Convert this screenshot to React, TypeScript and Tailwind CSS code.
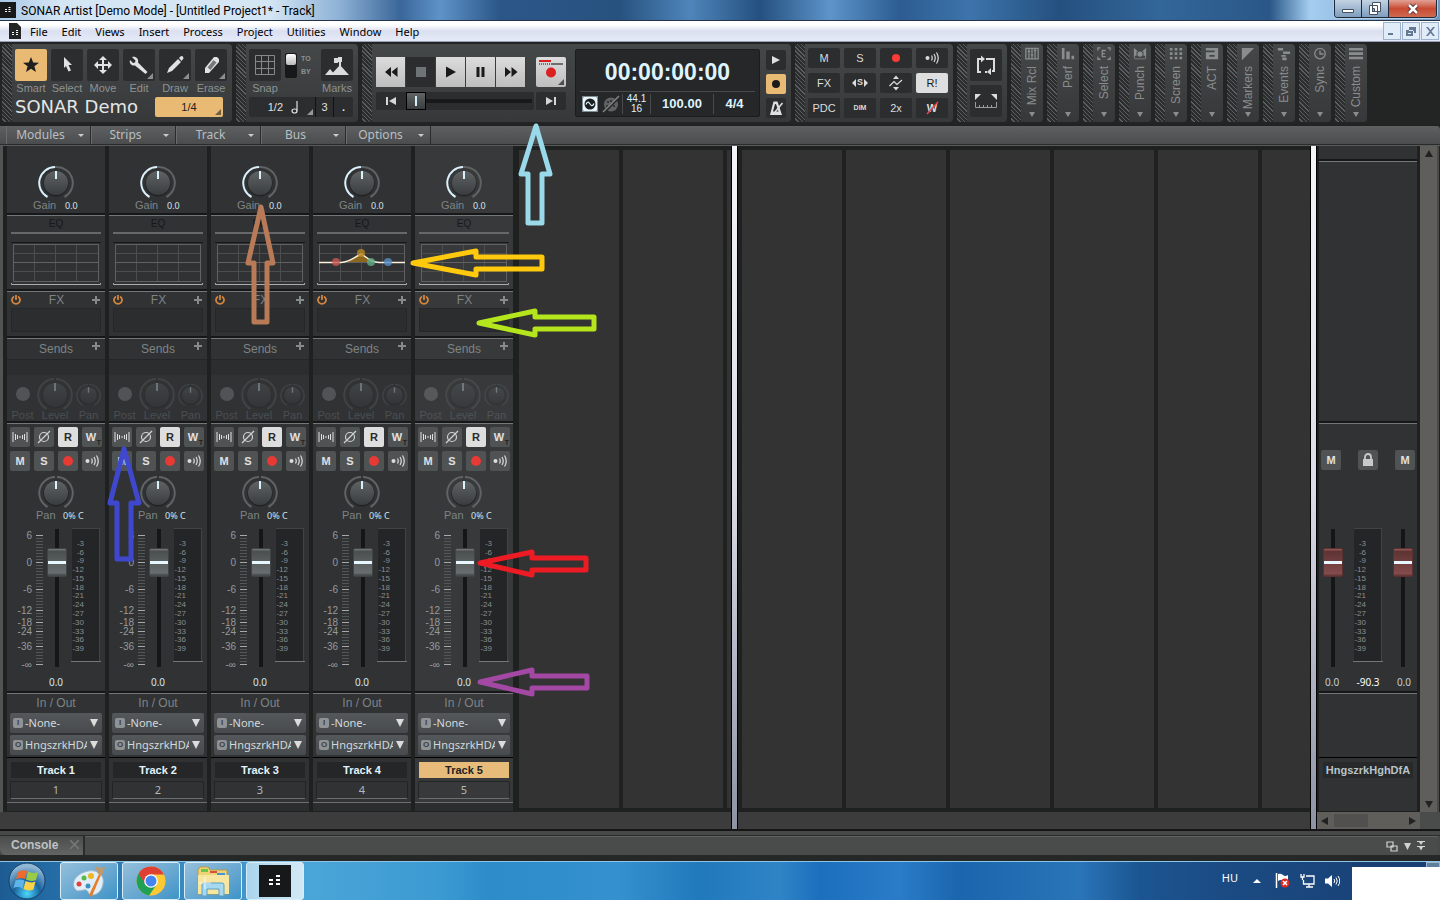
import React from "react";

const tracks = [1, 2, 3, 4, 5];
const meterLabels = [3, 6, 9, 12, 15, 18, 21, 24, 27, 30, 33, 36, 39];
const meterY = [15, 24, 32, 41, 50, 59, 67, 76, 85, 94, 103, 111, 120];
const scale = [
  { label: "6", y: 7 },
  { label: "0", y: 34 },
  { label: "-6", y: 61 },
  { label: "-12", y: 82 },
  { label: "-18", y: 94 },
  { label: "-24", y: 103 },
  { label: "-36", y: 118 },
  { label: "-∞", y: 136 },
];

const Corner = () => (
  <svg className="absolute right-0.5 bottom-0.5" width="6" height="6" viewBox="0 0 6 6">
    <path d="M6 0V6H0Z" fill="currentColor" opacity="0.6" />
  </svg>
);

const Panel = ({ children, className = "" }: { children: React.ReactNode; className?: string }) => (
  <div className="flex shrink-0 rounded-sm bg-linear-to-b from-[#454849] to-[#363839]">
    <div className="w-2.5 rounded-l-sm bg-[repeating-linear-gradient(45deg,#2b2d2e_0_2px,#5a5e5f_2px_3px)]" />
    <div className={`pt-[5px] pr-[5px] pl-[3px] ${className}`}>{children}</div>
  </div>
);

/* ---------- toolbar ---------- */

const tools = [
  { name: "Smart", icon: <path d="M16 8l2.200 5.500 5.800.2-4.600 3.600 1.600 5.700-5-3.300-5 3.300 1.600-5.700L8 13.700l5.800-.2z" fill="#1d1f20" /> },
  { name: "Select", icon: <path d="M13 8l8 8h-3.500l2.500 5.500-2.500 1L15 17l-2 2z" fill="#e2e2e2" /> },
  {
    name: "Move",
    icon: (
      <path
        d="M16 7l4 4h-3v4h4v-3l4 4-4 4v-3h-4v4h3l-4 4-4-4h3v-4h-4v3l-4-4 4-4v3h4v-4h-3z"
        fill="#e2e2e2"
      />
    ),
  },
  {
    name: "Edit",
    corner: true,
    icon: (
      <path
        d="M9 8l3.500 3.500-.5 2-2 .5L7 11c-1 3 1 6 5 5.500L22.500 25l2-2L15 13.500C16 10 13 7 9 8z"
        fill="#e2e2e2"
      />
    ),
  },
  {
    name: "Draw",
    corner: true,
    icon: <path d="M8 24l2-5 9-9 3 3-9 9zM20 9l2-2 2 .5.500 2-2 2.500z" fill="#e2e2e2" />,
  },
  {
    name: "Erase",
    corner: true,
    icon: (
      <g>
        <path d="M10 24v-5l9-11h3l2 2v3L14 24z" fill="#e2e2e2" />
        <path d="M12.500 18.500l6-7.500 3 2.500-6 7.500z" fill="#77797a" />
      </g>
    ),
  },
];

const ToolsPanel = () => (
  <Panel>
    <div className="flex gap-1">
      {tools.map(({ name, icon, corner }) => (
        <div key={name} className="flex w-8 flex-col items-center">
          <button
            aria-label={name}
            className={`relative size-8 rounded-xs ${
              name === "Smart" ? "bg-[#e9ba73]" : "bg-[#2b2d2e] text-[#cfcfcf]"
            }`}
          >
            <svg width="32" height="32" viewBox="0 0 32 32">{icon}</svg>
            {corner && <Corner />}
          </button>
          <span className="text-[11px] leading-[14px] text-[#8d9292]">{name}</span>
        </div>
      ))}
    </div>
    <div className="mt-0.5 flex h-5 items-center justify-between pr-1">
      <span className="font-['DejaVu_Sans',sans-serif] text-[18px] leading-5 whitespace-nowrap text-[#e4e6e6]">
        SONAR Demo
      </span>
      <button className="relative h-5 w-[68px] rounded-xs bg-[#e9ba73] text-[11px] text-[#222]">
        1/4
        <Corner />
      </button>
    </div>
  </Panel>
);

const SnapPanel = () => (
  <Panel>
    <div className="flex w-[104px] gap-1">
      <div className="flex w-8 flex-col items-center">
        <button aria-label="Snap" className="size-8 rounded-xs bg-[#2b2d2e]">
          <svg width="32" height="32" viewBox="0 0 32 32">
            <path d="M6.500 6.500h19v19h-19zM12.500 6v20M19.500 6v20M6 12.500h20M6 19.500h20" fill="none" stroke="#85898a" />
          </svg>
        </button>
        <span className="text-[11px] leading-[14px] text-[#8d9292]">Snap</span>
      </div>
      <button aria-label="Snap to or by" className="mt-1 flex h-[25px] w-3 flex-col rounded-xs bg-[#161819] p-px">
        <span className="h-[11px] w-full rounded-xs bg-linear-to-b from-white to-[#b9b9b9]" />
      </button>
      <div className="flex flex-1 flex-col pt-[3px] text-[7px] font-bold text-[#8d9292]">
        <span className="leading-[13px]">TO</span>
        <span className="leading-[13px]">BY</span>
      </div>
      <div className="flex w-8 flex-col items-center">
        <button aria-label="Marks" className="size-8 rounded-xs bg-[#2b2d2e]">
          <svg width="32" height="32" viewBox="0 0 32 32">
            <path d="M4 26l5-6 3 3.500L19 16l9 10zM13 9h4V8h4v5h-4v1h-4zM18 12h2v6h-2z" fill="#dcdcdc" />
          </svg>
        </button>
        <span className="text-[11px] leading-[14px] text-[#8d9292]">Marks</span>
      </div>
    </div>
    <div className="mt-0.5 flex h-5 rounded-xs bg-[#2b2d2e] text-[11px] text-[#e0e0e0]">
      <button className="relative flex flex-1 items-center justify-end gap-2 pr-[17px] text-[#e0e0e0]">
        1/2
        <svg width="7" height="13" viewBox="0 0 7 13">
          <path d="M6 0v9.500" stroke="#e0e0e0" strokeWidth="1.200" />
          <ellipse cx="3.500" cy="10" rx="2.500" ry="2" fill="none" stroke="#e0e0e0" strokeWidth="1.200" />
        </svg>
        <Corner />
      </button>
      <button className="w-[18px] border-l border-[#111]">3</button>
      <button className="w-5 border-l border-[#111] font-bold">.</button>
    </div>
  </Panel>
);

const transport = [
  { name: "Rewind", d: "M15 10v10l-6-5zM21.500 10v10l-6-5z" },
  { name: "Stop", d: "M10 10h10v10H10z" },
  { name: "Play", d: "M10 9.500v11l10-5.500z" },
  { name: "Pause", d: "M10.500 10h3v10h-3zM15.500 10h3v10h-3z" },
  { name: "Fast forward", d: "M9 10v10l6-5zM15.500 10v10l6-5z" },
];

const TransportPanel = () => (
  <Panel className="flex">
    <div className="mt-2 ml-px flex flex-col gap-[5px]">
      <div className="flex justify-between">
        <div className="flex">
          {transport.map(({ name, d }) => (
            <button
              key={name}
              aria-label={name}
              className={`h-[30px] w-[30px] border-r border-[#3a3c3d] ${
                name === "Stop" ? "bg-[#2b2d2e] text-[#6e7475]" : "bg-linear-to-b from-[#dcdcdc] to-[#bebebe] text-[#1a1a1a]"
              }`}
            >
              <svg width="29" height="30" viewBox="0 0 29 30">
                <path d={d} fill="currentColor" />
              </svg>
            </button>
          ))}
        </div>
        <button aria-label="Record" className="relative size-[30px] rounded-xs bg-linear-to-b from-[#dcdcdc] to-[#bebebe] text-black">
          <svg width="30" height="30" viewBox="0 0 30 30">
            <path d="M3 4h12" stroke="#d8201f" strokeWidth="2" />
            <path d="M15 7h12" stroke="#6f6f6f" strokeWidth="2" />
            <path d="M3 7h12" stroke="#6f6f6f" strokeWidth="2" strokeDasharray="1 1" />
            <circle cx="15" cy="15.500" r="5" fill="#dc1f1f" />
          </svg>
          <Corner />
        </button>
      </div>
      <div className="flex h-[18px] gap-0.5">
        <div className="flex w-[158px] rounded-xs bg-[#2b2d2e]">
          <button aria-label="Go to start" className="flex w-[30px] items-center justify-center">
            <svg width="10" height="8" viewBox="0 0 10 8">
              <path d="M0 0h2v8H0zM10 0v8L3 4z" fill="#d6d6d6" />
            </svg>
          </button>
          <input
            type="range"
            aria-label="Position"
            defaultValue={0}
            className="h-[18px] w-[126px] appearance-none bg-[linear-gradient(#17191a,#17191a)] bg-[length:100%_4px] bg-center bg-no-repeat [&::-webkit-slider-thumb]:h-[18px] [&::-webkit-slider-thumb]:w-5 [&::-webkit-slider-thumb]:appearance-none [&::-webkit-slider-thumb]:border [&::-webkit-slider-thumb]:border-black [&::-webkit-slider-thumb]:bg-[linear-gradient(#d5eefa,#d5eefa),linear-gradient(#606465,#3a3d3e)] [&::-webkit-slider-thumb]:bg-[length:2px_10px,100%_100%] [&::-webkit-slider-thumb]:bg-center [&::-webkit-slider-thumb]:bg-no-repeat"
          />
        </div>
        <button aria-label="Go to end" className="flex w-[30px] items-center justify-center rounded-xs bg-[#2b2d2e]">
          <svg width="10" height="8" viewBox="0 0 10 8">
            <path d="M8 0h2v8H8zM0 0v8l7-4z" fill="#d6d6d6" />
          </svg>
        </button>
      </div>
    </div>
    <div className="ml-[9px] flex h-[68px] w-[185px] flex-col rounded-xs border border-[#1b1c1d] bg-[#262728] px-1 text-[#def4ff]">
      <div className="flex h-[42px] items-center justify-center border-b border-[#48494a] pt-[3px] text-[23px] font-bold">
        00:00:00:00
      </div>
      <div className="flex flex-1 items-center text-[13px] font-bold">
        <svg width="42" height="20" viewBox="0 0 42 20">
          <rect x="2.500" y="2.500" width="15" height="15" fill="none" stroke="#dff4ff" strokeDasharray="1 1" />
          <rect x="3" y="3" width="14" height="14" rx="1" fill="#e8f6fd" />
          <circle cx="10" cy="10" r="5.500" fill="#1d1e1f" />
          <path d="M6 10.500c1.500-4 3-2 4-.5s2.500 3 4-.5" fill="none" stroke="#dff4ff" strokeWidth="1.200" />
          <circle cx="31" cy="10.500" r="7" fill="#606364" />
          <path d="M27 8h2M31 6v2M35 8h-2M26 12h2M35 12h-2" stroke="#262728" strokeWidth="1.500" />
          <path d="M23 19L39 3" stroke="#262728" strokeWidth="3" />
          <path d="M23 18L39 2" stroke="#858889" strokeWidth="1.500" />
        </svg>
        <div className="flex h-5 w-[29px] flex-col justify-center border-x border-[#48494a] text-center text-[10px] leading-[10px] font-normal">
          <span>44.1</span>
          <span>16</span>
        </div>
        <span className="flex-1 text-center leading-5">100.00</span>
        <span className="w-[42px] border-l border-[#48494a] text-center leading-5">4/4</span>
      </div>
    </div>
    <div className="ml-1.5 flex flex-col gap-1 pt-px">
      <button aria-label="Play mode" className="flex size-5 items-center justify-center rounded-xs bg-[#2b2d2e]">
        <svg width="8" height="8" viewBox="0 0 8 8"><path d="M0 0l8 4-8 4z" fill="#e0e0e0" /></svg>
      </button>
      <button aria-label="Record mode" className="flex size-5 items-center justify-center rounded-xs bg-[#e9ba73]">
        <span className="size-2 rounded-full bg-[#1b1b1b]" />
      </button>
      <button aria-label="Metronome" className="flex size-5 items-center justify-center rounded-xs bg-[#2b2d2e]">
        <svg width="16" height="16" viewBox="0 0 16 16">
          <path d="M2 15L5.500 1.500h4L14 15z" fill="#e0e0e0" />
          <path d="M5 11.500L7 4h1l2.500 7.500z" fill="#2b2d2e" />
          <path d="M7 12l7.500-9" stroke="#e0e0e0" strokeWidth="1.500" />
        </svg>
      </button>
    </div>
  </Panel>
);

const Echo = () => (
  <svg width="14" height="14" viewBox="0 0 14 14" fill="none" stroke="#dcdcdc" strokeWidth="1.200">
    <circle cx="2.500" cy="7" r="2" fill="#dcdcdc" stroke="none" />
    <path d="M6.500 4.500q1.500 2.500 0 5M9 3q2.500 4 0 8M11.500 1.500q3.500 5.500 0 11" />
  </svg>
);

const mixButtons = [
  { name: "Mute", body: "M" },
  { name: "Solo", body: "S" },
  { name: "Arm", body: <span className="size-2 rounded-full bg-[#fb3b36]" /> },
  { name: "Input echo", body: <Echo /> },
  { name: "FX", body: "FX" },
  {
    name: "Solo override",
    body: (
      <>
        <svg width="4" height="8" viewBox="0 0 4 8"><path d="M4 0v8L0 4z" fill="#dcdcdc" /></svg>
        <span className="px-px text-[9px] font-bold">S</span>
        <svg width="4" height="8" viewBox="0 0 4 8"><path d="M0 0v8l4-4z" fill="#dcdcdc" /></svg>
      </>
    ),
  },
  {
    name: "Automation",
    body: (
      <svg width="16" height="16" viewBox="0 0 16 16">
        <path d="M5 4l3-3.500L11 4zM5 12l3 3.500 3-3.500z" fill="#dcdcdc" />
        <path d="M1.500 11L6 6.500l3 3 5-4.500" fill="none" stroke="#dcdcdc" strokeWidth="1.200" />
      </svg>
    ),
  },
  { name: "Read", body: "R!" },
  { name: "PDC", body: "PDC" },
  { name: "Dim", body: <span className="text-[7px] font-bold">DIM</span> },
  { name: "2x", body: "2x" },
  {
    name: "Write",
    body: (
      <span className="relative font-bold">
        W
        <svg className="absolute top-0 -left-px" width="13" height="16" viewBox="0 0 13 16">
          <path d="M1 14L12 2" stroke="#f04440" strokeWidth="1.500" />
        </svg>
      </span>
    ),
  },
];

const MixPanel = () => (
  <Panel>
    <div className="-mt-px grid grid-cols-[repeat(4,32px)] gap-x-1 gap-y-[5px]">
      {mixButtons.map(({ name, body }) => (
        <button
          key={name}
          aria-label={name}
          className={`flex h-5 items-center justify-center rounded-xs text-[11px] ${
            name === "Read" ? "bg-[#dedede] text-[#1b1b1b]" : "bg-[#2b2d2e] text-[#dcdcdc]"
          }`}
        >
          {body}
        </button>
      ))}
    </div>
  </Panel>
);

const LoopPanel = () => (
  <Panel className="flex flex-col gap-1">
    <button aria-label="Loop" className="flex size-8 items-center justify-center rounded-xs bg-[#2b2d2e]">
      <svg width="20" height="20" viewBox="0 0 20 20" fill="none" stroke="#dcdcdc" strokeWidth="2">
        <path d="M5 17H2V4h3M10 4h8v12h-2M9 17h2" />
        <path d="M5 0.500v7L9 4zM15 13v7l-4-3z" fill="#dcdcdc" stroke="none" />
      </svg>
    </button>
    <button aria-label="Loop selection" className="flex size-8 items-center justify-center rounded-xs bg-[#2b2d2e]">
      <svg width="22" height="16" viewBox="0 0 22 16">
        <path d="M0 1h6L0 7zM22 1h-6l6 6z" fill="#dcdcdc" />
        <path d="M.5 9v5.500h21V9M4.500 12v3M8.500 12v3M12.500 12v3M16.500 12v3" fill="none" stroke="#9a9d9e" />
      </svg>
    </button>
  </Panel>
);

const collapsed = [
  { name: "Mix Rcl", d: "M1 1.500h14v12H1zM4.500 1v13M8 1v13M11.500 1v13M3 5h3M6.500 9h3M10 4h3" },
  { name: "Perf", fill: "M1 1h3v13H1zM6 5h4v9H6zM12 10h3v4h-3z" },
  { name: "Select", d: "M1 4V1h3M12 1h3v3M1 11v3h3M12 14h3v-3M10 4H6v7h4M6 7.500h3" },
  { name: "Punch", fill: "M1 1l5 4H4v5H2v4H1zM15 1l-5 4h2v5h2v4h1zM8 5a3 3 0 1 1 0 6 3 3 0 0 1 0-6zM1 13h14v1H1z" },
  { name: "Screen", fill: "M1 1h3v3H1zM6.500 1h3v3h-3zM12 1h3v3h-3zM1 6h3v3H1zM6.500 6h3v3h-3zM12 6h3v3h-3zM1 11h3v3H1zM6.500 11h3v3h-3zM12 11h3v3h-3z" },
  { name: "ACT", fill: "M1 1h14v13H1V6h10V4H1zM5 9v2h6V9z" },
  { name: "Markers", fill: "M1 1h14L1 15z" },
  { name: "Events", fill: "M1 1h6v3H1zM7 5h8v3H7zM5 9h5v2H5zM6 12h5v3H6z" },
  { name: "Sync", d: "M8 1.500a6 6 0 1 1 0 12 6 6 0 0 1 0-12M8 4v4h4" },
  { name: "Custom", fill: "M0 1h16v3H0zM0 6h16v3H0zM0 11h16v3H0z" },
];

const Toolbar = () => (
  <div className="flex h-[82px] items-stretch gap-1 overflow-hidden bg-[#232424] px-0.5 py-0.5">
    <ToolsPanel />
    <SnapPanel />
    <TransportPanel />
    <MixPanel />
    <LoopPanel />
    {collapsed.map(({ name, d, fill }) => (
      <div key={name} className="flex w-8 shrink-0 rounded-sm bg-linear-to-b from-[#454849] to-[#363839]">
        <div className="w-2.5 bg-[repeating-linear-gradient(45deg,#2b2d2e_0_2px,#5a5e5f_2px_3px)]" />
        <button className="flex flex-1 flex-col items-center pt-[3px] text-[#8a8d8d]">
          <svg width="14" height="14" viewBox="0 0 16 16">
            {d && <path d={d} fill="none" stroke="currentColor" strokeWidth="1.500" />}
            {fill && <path d={fill} fill="currentColor" fillRule="evenodd" />}
          </svg>
          <span className="mt-[5px] rotate-180 text-xs leading-4 whitespace-nowrap [writing-mode:vertical-rl]">{name}</span>
          <svg className="mt-auto mb-[5px]" width="6" height="5" viewBox="0 0 6 5">
            <path d="M0 0h6L3 5z" fill="currentColor" />
          </svg>
        </button>
      </div>
    ))}
  </div>
);

/* ---------- channel strips ---------- */

const Knob = ({ lit = false, size = 36 }: { lit?: boolean; size?: number }) => (
  <svg width={size} height={size} viewBox="0 0 36 36" fill="none">
    <defs>
      <linearGradient id="knob" x1="0" y1="0" x2="0" y2="1">
        <stop offset="0" stopColor="#5f6364" />
        <stop offset="1" stopColor="#3a3d40" />
      </linearGradient>
    </defs>
    <path d="M9.500 32A16 16 0 0 1 17 2" stroke={lit ? "#daf0fb" : "#606364"} strokeWidth="2" />
    <path d={lit ? "M17 2H18A16 16 0 0 1 26.500 32" : "M19 2A16 16 0 0 1 26.500 32"} stroke="#606364" strokeWidth="2" />
    <circle cx="18" cy="19" r="12.500" fill="#1b1c1d" opacity=".7" />
    <circle cx="18" cy="18" r="12" fill="url(#knob)" />
    <path d="M18 6v8" stroke="#daf0fb" strokeWidth="2" />
  </svg>
);

const EqGraph = ({ curve }: { curve: boolean }) => (
  <svg width="90" height="44" viewBox="0 0 90 44" fill="none">
    <path d="M0 .5h90" stroke="#171819" />
    <path d="M2 11.500h86M2 29.500h86M23.500 2v38M44.500 2v38M65.500 2v38" stroke="#4b4d4e" />
    <path d="M2 20.500h86" stroke="#5f6162" />
    <path d="M2.500 2.500h85v37h-85z" stroke="#5f6162" />
    <path d="M.5 41v1.500h89V41" stroke="#a9acac" />
    {curve && (
      <g>
        <path d="M26 20c10-.5 13-6 18-8.500 5 2.500 6 7.500 16 8.500z" fill="#8b671e" />
        <path d="M2 20.500h22c10-1 14-6 20-8.500 5 2 8 8 18 8.500h26" stroke="#fff0dc" strokeWidth="1.500" />
        <circle cx="19" cy="20" r="4" fill="#c65a54" opacity=".8" />
        <circle cx="44" cy="11" r="4" fill="#b98726" opacity=".8" />
        <circle cx="54" cy="20" r="4" fill="#5fae87" opacity=".8" />
        <circle cx="71" cy="20" r="4" fill="#568ec4" opacity=".8" />
      </g>
    )}
  </svg>
);

const Plus = () => (
  <svg width="8" height="8" viewBox="0 0 8 8"><path d="M3 0h2v3h3v2H5v3H3V5H0V3h3z" fill="#858a8b" /></svg>
);

const Meter = () => (
  <svg width="32" height="134" viewBox="0 0 32 134" fontSize="8" fontFamily="Liberation Sans, Arial, sans-serif" textAnchor="end">
    <path d="M2 0h28v133H2z" fill="#232527" />
    <path d="M2 .5h28M29.500 0v133" stroke="#414344" />
    <path d="M1 133.500h30" stroke="#747777" />
    {meterLabels.map((n, i) => (
      <text key={n} x="14" y={meterY[i] + 3} fill="#8b8e8f">{`-${n}`}</text>
    ))}
  </svg>
);

const faderClass =
  "block h-[138px] w-5 appearance-none bg-[linear-gradient(#151617,#151617)] bg-[length:4px_100%] bg-center bg-no-repeat [direction:rtl] [writing-mode:vertical-lr] [&::-webkit-slider-thumb]:h-[29px] [&::-webkit-slider-thumb]:w-5 [&::-webkit-slider-thumb]:appearance-none [&::-webkit-slider-thumb]:rounded-xs [&::-webkit-slider-thumb]:border";
const grayThumb =
  "[&::-webkit-slider-thumb]:border-[#404445] [&::-webkit-slider-thumb]:bg-[linear-gradient(transparent_12px,#e6f7ff_12px_15px,transparent_15px),linear-gradient(#6c7172_0_1px,#4a4e4f_2px,#686e6f_24px,#474b4c_26px)]";
const redThumb =
  "[&::-webkit-slider-thumb]:border-[#5a3232] [&::-webkit-slider-thumb]:bg-[linear-gradient(transparent_12px,#e6f7ff_12px_15px,transparent_15px),linear-gradient(#905454_0_1px,#5e3333_2px,#844b4b_25px,#643838_26px)]";

const Fader = ({ label, red = false }: { label: string; red?: boolean }) => (
  <input type="range" aria-label={label} min={0} max={109} defaultValue={90} className={`${faderClass} ${red ? redThumb : grayThumb}`} />
);

const sectionEnd = "border-b-2 border-b-[#161718]";
const section = "border-t border-t-[#747777] border-b-2 border-b-[#161718]";
const stripButton = "flex size-5 items-center justify-center rounded-xs bg-[#505354] text-[11px] font-bold text-[#e0e0e0]";

const IoSelect = ({ kind, value, id }: { kind: string; value: string; id: string }) => (
  <div className="flex h-5 items-center rounded-xs bg-linear-to-b from-[#54585a] to-[#484b4d] pr-1 pl-[3px]">
    <label htmlFor={id} className="w-2.5 rounded-xs bg-[#8f9394] text-center text-[8px] leading-[10px] font-bold text-[#3c3f40]">
      {kind}
    </label>
    <select
      id={id}
      className="ml-0.5 w-[62px] appearance-none overflow-hidden bg-transparent p-0 font-['Noto_Sans',sans-serif] text-[11px] leading-5 text-[#d4d8d9]"
    >
      <option>{value}</option>
    </select>
    <svg className="ml-auto" width="8" height="8" viewBox="0 0 8 8"><path d="M0 0h8L4 8z" fill="#dcdcdc" /></svg>
  </div>
);

const Strip = ({ n }: { n: number }) => {
  const active = n === 5;
  return (
    <div className={`flex w-[98px] shrink-0 flex-col text-[#7e8485] ${active ? "bg-[#37393b]" : "bg-[#303234]"}`}>
      <div className={`flex h-[69px] flex-col items-center pt-[19px] ${sectionEnd}`}>
        <Knob lit />
        <div className="-mt-px flex w-full items-center pl-[26px] text-[11px] leading-[11px]">
          <span className="w-8">Gain</span>
          <span className="font-['Noto_Sans',sans-serif] text-[9px] text-[#d3e2ea]">0.0</span>
        </div>
      </div>
      <div className={`flex h-[76px] flex-col items-center px-1 ${section}`}>
        <span className="w-full border-b-2 border-[#66696a] text-center text-[10px] leading-4 text-[#17181a]">EQ</span>
        <div className="mt-2">
          <EqGraph curve={n === 4} />
        </div>
      </div>
      <div className={`h-[47px] px-1 ${section}`}>
        <div className="flex h-4 items-center justify-between pr-px">
          <button aria-label="FX power">
            <svg width="10" height="10" viewBox="0 0 10 10" fill="none" stroke="#d2853c" strokeWidth="1.800">
              <path d="M3 1.500a4 4 0 1 0 4 0M5 0v5" />
            </svg>
          </button>
          <span className="text-xs leading-4">FX</span>
          <button aria-label="Add effect"><Plus /></button>
        </div>
        <div className="h-6 border border-[#252728] bg-[#2b2d2f]" />
      </div>
      <div className={`flex h-[85px] flex-col ${section}`}>
        <div className="flex h-5 items-center justify-between pr-[5px] pl-[13px]">
          <span className="flex-1 text-center text-xs leading-5">Sends</span>
          <button aria-label="Add send" className="mb-1.5"><Plus /></button>
        </div>
        <div className="h-4 border-t border-[#242627] bg-[#2b2d2f]" />
        <div className="flex flex-1 justify-between px-1 text-[11px] leading-[11px] opacity-35">
          <div className="flex w-[23px] flex-col items-center">
            <span className="mt-3 mb-[9px] size-3.5 rounded-full bg-[#8f9596]" />
            Post
          </div>
          <div className="flex flex-col items-center pt-0.5">
            <Knob />
            <span className="-mt-[3px]">Level</span>
          </div>
          <div className="flex w-[25px] flex-col items-center pt-2">
            <Knob size={25} />
            <span className="mt-0.5">Pan</span>
          </div>
        </div>
      </div>
      <div className={`flex h-[270px] flex-col ${section}`}>
        <div className="grid grid-cols-[repeat(4,20px)] gap-1 pt-[3px] pl-[3px]">
          <button aria-label="Interleave" className={stripButton}>
            <svg width="16" height="10" viewBox="0 0 16 10">
              <path d="M1 0v10M3.500 2v6M5.500 3v4M10.500 3v4M12.500 2v6M15 0v10M7 5h2" stroke="#e0e0e0" />
            </svg>
          </button>
          <button aria-label="Phase" className={stripButton}>
            <svg width="14" height="14" viewBox="0 0 14 14" fill="none" stroke="#d0d3d3" strokeWidth="1.200">
              <circle cx="7" cy="7" r="4.500" />
              <path d="M1 13L13 1" />
            </svg>
          </button>
          <button className="flex size-5 items-center justify-center rounded-xs bg-[#dedede] text-[11px] font-bold text-[#2a2a2a]">R</button>
          <button aria-label="Write" className={`relative ${stripButton}`}>
            <span className="pr-0.5">W</span>
            <span className="absolute right-px bottom-0 text-[7px] leading-[8px] text-[#222]">T</span>
          </button>
          <button className={stripButton}>M</button>
          <button className={stripButton}>S</button>
          <button aria-label="Arm" className={stripButton}><span className="size-2.5 rounded-full bg-[#e83a35]" /></button>
          <button aria-label="Input echo" className={stripButton}><Echo /></button>
        </div>
        <div className="flex justify-center pt-1"><Knob /></div>
        <div className="-mt-px flex items-center pl-[29px] text-[11px] leading-[11px]">
          <span className="w-[27px]">Pan</span>
          <span className="font-['Noto_Sans',sans-serif] text-[9px] whitespace-nowrap text-[#d3e2ea]">0% C</span>
        </div>
        <div className="mt-[7px] flex">
          <svg width="37" height="142" viewBox="0 0 37 142" fontSize="10" fontFamily="Liberation Sans, Arial, sans-serif" textAnchor="end">
            {Array.from({ length: 44 }, (_, i) => (
              <path key={i} d={`M29 ${7.5 + i * 3}h7`} stroke="#545758" />
            ))}
            {scale.map(({ label, y }) => (
              <g key={label}>
                <path d={`M29 ${y + 0.5}h7`} stroke="#a5a9a9" />
                <text x="25" y={y + 4} fill="#969a9b">{label}</text>
              </g>
            ))}
          </svg>
          <div className="ml-[3px] pt-px"><Fader label={`Volume ${n}`} /></div>
          <div className="ml-[3px]"><Meter /></div>
        </div>
        <span className="mt-1 text-center font-['Noto_Sans',sans-serif] text-[10px] leading-4 text-[#d3e2ea]">0.0</span>
      </div>
      <div className="flex h-16 flex-col gap-0.5 border-t border-t-[#747777] px-[3px]">
        <span className="mb-px h-4 text-center text-xs leading-[18px]">In / Out</span>
        <IoSelect kind="I" value="-None-" id={`in-${n}`} />
        <IoSelect kind="O" value="HngszrkHDA" id={`out-${n}`} />
      </div>
      <div className="flex flex-1 flex-col border-t border-black px-[3px] pt-1">
        <input
          aria-label={`Name of track ${n}`}
          defaultValue={`Track ${n}`}
          className={`mx-px h-4 w-[90px] text-center text-[11px] font-bold ${
            active ? "bg-[#e7bc7b] text-[#222]" : "bg-[#242628] text-[#e2f3fb]"
          }`}
        />
        <span className="mt-[3px] rounded-xs border border-[#232425] border-b-[#6c6f6f] text-center font-['Noto_Sans',sans-serif] text-[11px] leading-4 text-[#b3b8b9]">
          {n}
        </span>
        <div className="-mx-[3px] mt-[3px] flex-1 border-t border-[#6c6f6f] bg-[#2b2d2f]" />
      </div>
    </div>
  );
};

const EmptyColumns = ({ count }: { count: number }) => (
  <div className="flex min-w-0 flex-1 gap-1 overflow-hidden py-1">
    {Array.from({ length: count }, (_, i) => (
      <div key={i} className="w-[100px] shrink-0 bg-[#333333]" />
    ))}
  </div>
);

const Divider = () => (
  <div className="w-[7px] shrink-0 border-x border-black bg-linear-to-b from-[#f4f4f8] via-[#dcdce8] to-[#8d93a3]" />
);

const Master = () => (
  <div className="flex w-[98px] flex-col bg-[#303234]">
    <div className={`h-[15px] ${sectionEnd}`} />
    <div className={`h-[262px] ${section}`} />
    <div className={`h-[270px] ${section}`}>
      <div className="flex justify-between px-0.5 pt-[26px]">
        <button aria-label="Mute left" className={stripButton}>M</button>
        <button aria-label="Link" className={stripButton}>
          <svg width="12" height="14" viewBox="0 0 12 14">
            <path d="M1 6h10v7H1z" fill="#c8caca" />
            <path d="M3 7V4a3 3 0 0 1 6 0v3" fill="none" stroke="#c8caca" strokeWidth="1.800" />
          </svg>
        </button>
        <button aria-label="Mute right" className={stripButton}>M</button>
      </div>
      <div className="mt-[58px] flex justify-between px-1">
        <div className="pt-px"><Fader red label="Master left" /></div>
        <Meter />
        <div className="pt-px"><Fader red label="Master right" /></div>
      </div>
      <div className="mt-[7px] flex justify-between px-1.5 font-['Noto_Sans',sans-serif] text-[10px] leading-4 text-[#c5cdd1]">
        <span>0.0</span>
        <span className="text-white">-90.3</span>
        <span>0.0</span>
      </div>
    </div>
    <div className="h-16 border-t border-t-[#747777]" />
    <div className="flex-1 border-t border-black px-1 pt-1">
      <p className="bg-[#27292a] text-center text-[11px] leading-4 font-bold text-[#b9c3c8]">HngszrkHghDfA</p>
    </div>
  </div>
);

const Console = () => (
  <main className="flex min-h-[683px] flex-1 bg-[#1f2020]">
    <div className="flex w-[731px] shrink-0 flex-col">
      <div className="flex flex-1 border-l-[3px] border-[#525454] pl-1">
        <div className="flex gap-1 pb-px">
          {tracks.map((n) => (
            <Strip key={n} n={n} />
          ))}
        </div>
        <div className="flex min-w-0 flex-1 pl-1.5"><EmptyColumns count={3} /></div>
      </div>
      <div className="h-[17px] bg-[#3c3c3c]" />
    </div>
    <Divider />
    <div className="flex min-w-0 flex-1 flex-col">
      <div className="flex flex-1 pl-1"><EmptyColumns count={12} /></div>
      <div className="h-[17px] bg-[#3c3c3c]" />
    </div>
    <Divider />
    <div className="flex w-[123px] shrink-0 flex-col">
      <div className="flex flex-1">
        <div className="flex w-[103px] pb-px pl-0.5"><Master /></div>
        <div className="flex w-[17px] flex-col items-center justify-between bg-[#5f5e5b] py-1">
          <button aria-label="Scroll up" className="flex"><svg width="8" height="7" viewBox="0 0 8 7"><path d="M0 7h8L4 0z" fill="#222" /></svg></button>
          <button aria-label="Scroll down" className="flex"><svg width="8" height="7" viewBox="0 0 8 7"><path d="M0 0h8L4 7z" fill="#222" /></svg></button>
        </div>
        <div className="w-[3px] border-r border-[#222] bg-[#484a4a]" />
      </div>
      <div className="flex h-[17px] bg-[#4a4c4b]">
        <div className="flex w-[103px] items-center justify-between bg-[#5f5e5b] px-1">
          <button aria-label="Scroll left"><svg width="7" height="8" viewBox="0 0 7 8"><path d="M7 0v8L0 4z" fill="#222" /></svg></button>
          <div className="mr-9 h-[13px] w-[34px] bg-[#51504e]" />
          <button aria-label="Scroll right"><svg width="7" height="8" viewBox="0 0 7 8"><path d="M0 0v8l7-4z" fill="#222" /></svg></button>
        </div>
      </div>
    </div>
  </main>
);

/* ---------- window frame ---------- */

const SonarMark = ({ size }: { size: number }) => (
  <svg width={size} height={size} viewBox="0 0 32 32">
    <path d="M0 0h32v32H0z" fill="#17181a" />
    <path d="M10 14h4v2h-4zM10 18h4v2h-4zM17 10h4v2h-4zM17 14h4v2h-4zM17 18h4v2h-4z" fill="#fff" />
  </svg>
);

const TitleBar = () => (
  <header className="flex h-[21px] items-center justify-between border-b border-[#26344a] bg-[linear-gradient(90deg,#a9c8e6_0,#d4e5f4_60px,#d4e5f4_270px,#8db1d6_340px,#3a6699_400px,#5e93c8_440px,#2b5688_500px,#27527f_620px,#4f85bb_690px,#24507f_760px,#5d94ca_830px,#2c5c91_900px,#3d74ab_970px,#24507f_1060px,#336699_1160px,#2a5788_1270px,#a4cdf0_1310px,#6f97c0_1440px)]">
    <div className="flex items-center gap-[5px]">
      <SonarMark size={16} />
      <h1 className="pt-px font-['Roboto',sans-serif] text-xs leading-5 whitespace-nowrap text-black">
        SONAR Artist [Demo Mode] - [Untitled Project1* - Track]
      </h1>
    </div>
    <div className="mr-[3px] flex h-[18px] self-start overflow-hidden rounded-b-[4px] border border-t-0 border-[#1d2a3c] shadow-[0_0_0_1px_#b5cde4]">
      <button aria-label="Minimize" className="flex w-[27px] items-center justify-center border-r border-[#1d2a3c] bg-linear-to-b from-[#c3d3e4] to-[#7f9dbd]">
        <svg width="12" height="12" viewBox="0 0 12 12"><path d="M.5 6.500h11v3H.5z" fill="#fff" stroke="#44505e" /></svg>
      </button>
      <button aria-label="Restore" className="flex w-[27px] items-center justify-center border-r border-[#1d2a3c] bg-linear-to-b from-[#c3d3e4] to-[#7f9dbd]">
        <svg width="14" height="13" viewBox="0 0 14 13" fill="#fff" stroke="#44505e">
          <path d="M4.500 .5h8v9h-8zM1.500 3.500h8v9h-8z" />
          <path d="M4.500 6.500h2v3h-2z" fill="#8fa9c4" />
        </svg>
      </button>
      <button aria-label="Close" className="flex w-[47px] items-center justify-center bg-linear-to-b from-[#e0a194] via-[#c84a33] to-[#cf6a50]">
        <svg width="14" height="12" viewBox="0 0 14 12">
          <path d="M3 2l8 8M11 2l-8 8" stroke="#4d2d2d" strokeWidth="4.500" />
          <path d="M3 2l8 8M11 2l-8 8" stroke="#fff" strokeWidth="2.500" />
        </svg>
      </button>
    </div>
  </header>
);

const menus = ["File", "Edit", "Views", "Insert", "Process", "Project", "Utilities", "Window", "Help"];

const MenuBar = () => (
  <nav className="flex h-[21px] items-center justify-between border-b border-[#9aa2b8] bg-linear-to-b from-white from-20% via-[#dbe0f1] via-50% to-[#e6eaf8]">
    <div className="flex items-center pl-2">
      <svg className="mr-px" width="14" height="16" viewBox="0 0 14 16">
        <path d="M1 0h8l4 4v12H1z" fill="#222426" />
        <path d="M4 9h2v1H4zM4 11h2v1H4zM8 7h2v1H8zM8 9h2v1H8zM8 11h2v1H8z" fill="#fff" />
      </svg>
      {menus.map((m) => (
        <button key={m} className="px-[7px] pt-px font-['Noto_Sans',sans-serif] text-[11px] leading-5 text-black">{m}</button>
      ))}
    </div>
    <div className="flex gap-px pr-px">
      {["M4 10h5v2H4z", "M6 4h7v6h-2V8H6zM3 7h7v6H3zM5 10v1h3v-1z", "M4 4h2l2.500 3L11 4h2L9.500 8.500 13 13h-2l-2.500-3L6 13H4l3.500-4.500z"].map((d, i) => (
        <button key={d} aria-label={["Minimize project", "Restore project", "Close project"][i]} className="flex h-[18px] w-[18px] items-center justify-center border border-[#9fb2cc] bg-[#e0ecf8]">
          <svg width="16" height="16" viewBox="0 0 16 16"><path d={d} fill="#657a92" fillRule="evenodd" /></svg>
        </button>
      ))}
    </div>
  </nav>
);

const ModeBar = () => (
  <div className="h-[22px] border-t-2 border-b border-t-[#222] border-b-[#585a5a] bg-[#2a2b2b] pb-px">
    <div className="flex h-[18px] rounded-tr-sm bg-linear-to-b from-[#5e6062] to-[#4a4c4d] pl-1.5">
      {["Modules", "Strips", "Track", "Bus", "Options"].map((m) => (
        <button
          key={m}
          className="flex w-[85px] items-center border-r border-l border-r-[#2a2b2b] border-l-[#6a6c6d] pr-1.5 font-['Noto_Sans',sans-serif] text-xs leading-4 text-[#b9bfc0]"
        >
          <span className="flex-1 pr-1 text-center">{m}</span>
          <svg width="6" height="3" viewBox="0 0 6 3"><path d="M0 0h6L3 3z" fill="#c9cccc" /></svg>
        </button>
      ))}
    </div>
  </div>
);

const DockBar = () => (
  <div className="flex h-8 flex-col border-t-2 border-b-[6px] border-t-[#161616] border-b-[#262727] bg-[#484848] pt-1">
    <div className="flex flex-1 border-t border-[#2a2b2b]">
      <button className="flex w-[83px] items-center justify-between rounded-bl-md bg-linear-to-b from-[#4b4d4d] to-[#636565] pr-1 pb-0.5 pl-[11px] text-xs font-bold text-[#bfc3c4]">
        Console
        <svg width="9" height="9" viewBox="0 0 9 9"><path d="M0 0l9 9M9 0L0 9" stroke="#777a7a" strokeWidth="1.500" /></svg>
      </button>
      <div className="mr-0.5 ml-0.5 flex flex-1 items-center justify-end gap-1.5 rounded-br-md border-t border-[#606262] bg-[#4a4c4b] pr-[13px] shadow-[-2px_0_#2a2b2b]">
        <button aria-label="Undock" className="flex">
          <svg width="12" height="11" viewBox="0 0 12 11" fill="#4a4c4b" stroke="#d0d2d2" strokeWidth="1.200">
            <path d="M1 1h6v5H1zM5 5h6v5H5z" />
          </svg>
        </button>
        <button aria-label="Dock menu" className="flex"><svg width="7" height="7" viewBox="0 0 7 7"><path d="M0 0h7L3.500 7z" fill="#d0d2d2" /></svg></button>
        <button aria-label="Collapse" className="flex">
          <svg width="8" height="10" viewBox="0 0 8 10"><path d="M0 0h8v1H6L4 4 2 1H0zM0 5h8v1H6L4 9.500 2 6H0z" fill="#d0d2d2" /></svg>
        </button>
      </div>
    </div>
  </div>
);

const Paint = () => (
  <svg width="36" height="34" viewBox="0 0 36 34">
    <path d="M17 7c9-2 17 4 15 13-1 6-5 11-11 11-4 0-3-4-6-5s-8 3-11-1C-1 17 7 9 17 7z" fill="#dfeef8" stroke="#9db7cb" />
    <circle cx="8" cy="20" r="2.500" fill="#e0413a" />
    <circle cx="13" cy="14" r="2.500" fill="#58b947" />
    <circle cx="20" cy="12" r="3" fill="#f1b624" />
    <circle cx="17" cy="22" r="2.500" fill="#3f8fc6" />
    <path d="M28 10l2 1-9 21-3 1 1-4z" fill="#e87d28" />
    <path d="M24 2l5 2 5-1-3 8-4-1z" fill="#c19a6b" />
  </svg>
);

const Chrome = () => (
  <svg width="30" height="30" viewBox="0 0 30 30">
    <circle cx="15" cy="15" r="14.500" fill="#fcc934" />
    <path d="M15 15L2.500 7.700A14.500 14.500 0 0 0 13 29.400l7-10z" fill="#1fa055" />
    <path d="M2.500 7.700A14.500 14.500 0 0 1 28 8.500H15l-6 9z" fill="#df4034" />
    <circle cx="15" cy="15" r="6.800" fill="#fff" />
    <circle cx="15" cy="15" r="5.500" fill="#4385f2" />
  </svg>
);

const Explorer = () => (
  <svg width="34" height="32" viewBox="0 0 34 32">
    <path d="M2 5l2-3h8l2 3h17v24H2z" fill="#eed377" stroke="#b99a44" />
    <path d="M5 4h7v3H5z" fill="#6fc447" />
    <path d="M14 6h7v2h-7z" fill="#d94e3c" />
    <path d="M21 8h8v3h-8z" fill="#4595d6" />
    <path d="M2 10h31v19H2z" fill="#f7e6a0" />
    <path d="M6 20q0-2 2-2h18q2 0 2 2v11h-5v-7H11v7H6z" fill="#a6d8f0" stroke="#5b9fc4" />
    <path d="M9 12v12M3 18h12" stroke="#fff" opacity=".8" />
  </svg>
);

const Taskbar = () => (
  <footer className="flex h-[39px] border-t border-[#8fc3e4] bg-[linear-gradient(90deg,#1d5c93_0,#266ea8_60px,#4aa5d8_310px,#3c9ad2_440px,#2d8cc9_490px,#3590cf_620px,#2079bb_700px,#2f84c6_780px,#1c6fbd_820px,#2a7cc8_900px,#1a65ad_960px,#2a74b8_1080px,#1b5591_1140px,#1b4a82_1230px,#173f73_1440px)]">
    <button aria-label="Start" className="mr-0.5 w-[58px] pl-2">
      <svg width="38" height="38" viewBox="0 0 38 38">
        <defs>
          <radialGradient id="orb" cx="50%" cy="85%" r="75%">
            <stop offset="0" stopColor="#4cd6fb" />
            <stop offset=".5" stopColor="#19639f" />
            <stop offset="1" stopColor="#8fb7d4" />
          </radialGradient>
        </defs>
        <circle cx="19" cy="19" r="18" fill="url(#orb)" stroke="#123e66" />
        <path d="M10 10q4-3 9-1l-2 8q-4-2-9 0z" fill="#ee6a2f" />
        <path d="M20 9.500q5 2.500 10 .5l-2 8q-5 2-10-.5z" fill="#9acb46" />
        <path d="M7.500 18.500q5-2 9 0l-2 8q-4-2.500-9-.5z" fill="#5fb4ea" />
        <path d="M17.500 19q5 2.500 10 .5l-2 8q-5 2-10-.5z" fill="#fbd14a" />
      </svg>
    </button>
    <div className="flex gap-1">
      {[
        { name: "Paint", icon: <Paint /> },
        { name: "Chrome", icon: <Chrome /> },
        { name: "Explorer", icon: <Explorer /> },
        { name: "SONAR", icon: <SonarMark size={32} /> },
      ].map(({ name, icon }) => (
        <button
          key={name}
          aria-label={name}
          className={`flex w-[58px] items-center justify-center rounded-[3px] border border-[#d9edf8] ${
            name === "SONAR" ? "bg-linear-to-r from-[#a9d4ec] to-[#d2e9f5]" : "bg-linear-to-br from-[#95bfda] to-[#3d94c8]"
          }`}
        >
          {icon}
        </button>
      ))}
    </div>
    <div className="ml-auto flex items-center gap-3.5 pr-3 pb-px font-['Noto_Sans',sans-serif] text-[11px] text-white">
      <span className="mb-1 pr-px">HU</span>
      <svg width="8" height="4" viewBox="0 0 8 4"><path d="M0 4h8L4 0z" fill="#fff" /></svg>
      <svg width="15" height="15" viewBox="0 0 15 15">
        <path d="M1.500 0v15" stroke="#fff" strokeWidth="1.500" />
        <path d="M3 1q3-1 5 1t5 0v7q-3 1-5-1t-5 0z" fill="#fff" />
        <circle cx="10" cy="10" r="4.500" fill="#dd2b24" />
        <path d="M8 8l4 4M12 8l-4 4" stroke="#fff" strokeWidth="1.500" />
      </svg>
      <svg className="-ml-1" width="15" height="15" viewBox="0 0 15 15" fill="none" stroke="#fff" strokeWidth="1.300">
        <path d="M6 3h8v8H3.500V7M6 14h7M9 11v3M1 1v3h3V1M2.500 4v3" />
      </svg>
      <svg className="-ml-1" width="15" height="14" viewBox="0 0 15 14" fill="none" stroke="#fff">
        <path d="M0 4.500h3L7 1v12L3 9.500H0z" fill="#fff" stroke="none" />
        <path d="M9 5q1.500 2 0 4M11 3.500q2.500 3.500 0 7M13 2q3.500 5 0 10" />
      </svg>
    </div>
    <div className="flex w-[88px] flex-col items-end bg-white">
      <div className="flex h-[5px] w-full justify-end bg-[#173f73]">
        <button aria-label="Show desktop" className="w-3.5 border border-b-0 border-[#9fb6cc] bg-[#5f7f9f]" />
      </div>
    </div>
  </footer>
);

const arrows = [
  { color: "#99d9ea", d: "M536 126L550 174H542V223H528V174H521Z" },
  { color: "#b97a57", d: "M261 207L273 263H267V322H254V263H248Z" },
  { color: "#ffc90e", d: "M413 263L476 251V257H542V269H476V275Z" },
  { color: "#b5e61d", d: "M479 323L535 311V317H594V329H535V335Z" },
  { color: "#ed1c24", d: "M480 563L532 552V558H586V570H532V575Z" },
  { color: "#a349a4", d: "M480 682L532 670V676H587V688H532V694Z" },
  { color: "#3f48cc", d: "M124 449L139 503H131V559H117V503H110Z" },
];

const App = () => (
  <div className="relative flex min-h-screen w-full flex-col overflow-hidden bg-[#232424] font-['Liberation_Sans',Arial,sans-serif]">
    <TitleBar />
    <MenuBar />
    <Toolbar />
    <ModeBar />
    <Console />
    <DockBar />
    <Taskbar />
    <svg className="pointer-events-none absolute top-0 left-0" width="1440" height="900" viewBox="0 0 1440 900">
      {arrows.map(({ color, d }) => (
        <path key={color} d={d} fill="none" stroke={color} strokeWidth="5" strokeLinejoin="round" />
      ))}
    </svg>
  </div>
);

export default App;
